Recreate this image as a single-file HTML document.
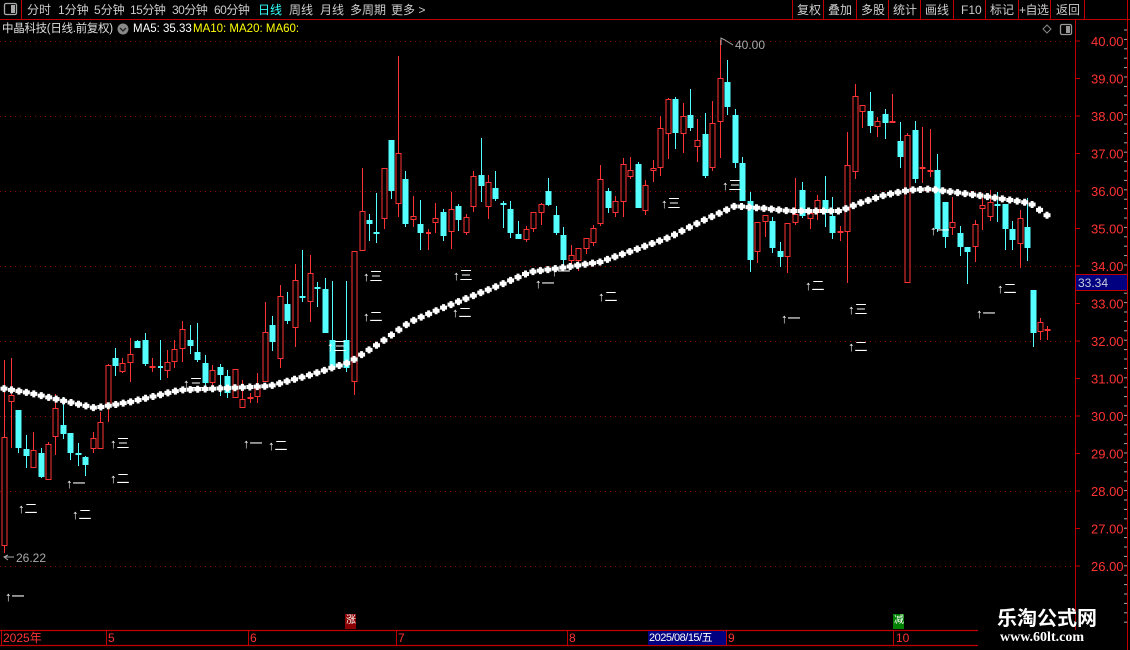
<!DOCTYPE html>
<html><head><meta charset="utf-8">
<style>
*{margin:0;padding:0;box-sizing:border-box}
body{width:1130px;height:650px;background:#000;overflow:hidden;position:relative;font-family:"Liberation Sans","Noto Sans CJK SC",sans-serif;color:#ccc}
.t{position:absolute;white-space:nowrap;font-size:12px;line-height:16px}
svg{position:absolute;left:0;top:0}
</style></head><body>
<svg width="1130" height="650" id="s">
<line x1="0" y1="19.5" x2="1130" y2="19.5" stroke="#c00000"/>
<line x1="21.5" y1="0" x2="21.5" y2="19" stroke="#c00000"/>
<rect x="4.5" y="3.5" width="12" height="11" rx="1.5" fill="none" stroke="#aaa" stroke-width="1.3"/>
<rect x="11" y="5" width="4" height="8" fill="#aaa"/>
<g stroke="#c00000">
<line x1="792.5" y1="0" x2="792.5" y2="19"/><line x1="823.5" y1="0" x2="823.5" y2="19"/>
<line x1="856.5" y1="0" x2="856.5" y2="19"/><line x1="888.5" y1="0" x2="888.5" y2="19"/>
<line x1="920.5" y1="0" x2="920.5" y2="19"/><line x1="953.5" y1="0" x2="953.5" y2="19"/>
<line x1="985.5" y1="0" x2="985.5" y2="19"/><line x1="1018.5" y1="0" x2="1018.5" y2="19"/>
<line x1="1050.5" y1="0" x2="1050.5" y2="19"/><line x1="1084.5" y1="0" x2="1084.5" y2="19"/>
<line x1="1127.5" y1="0" x2="1127.5" y2="650"/>
</g>
<circle cx="123" cy="29" r="5.5" fill="#888"/>
<path d="M120 28 L123 31 L126 28" stroke="#222" stroke-width="1.3" fill="none"/>
<path d="M1047 25 L1051 29 L1047 33 L1043 29 Z" fill="none" stroke="#888"/>
<rect x="1060.5" y="24.5" width="11" height="10" rx="1.5" fill="none" stroke="#999" stroke-width="1.3"/>
<rect x="1066" y="26" width="4" height="7" fill="#999"/>
<line x1="1075.5" y1="20" x2="1075.5" y2="630" stroke="#c00000"/>
<g id="grid"></g>
<g id="c"></g>
<g id="ma" fill="#fff"></g>
<rect x="1075.5" y="274.5" width="52" height="16" fill="#000080" stroke="#c00000"/>
<line x1="0" y1="630.5" x2="978" y2="630.5" stroke="#c00000" stroke-width="1.2"/>
<line x1="0" y1="645.5" x2="978" y2="645.5" stroke="#c00000" stroke-width="1.2"/>
<g stroke="#c00000">
<line x1="1.5" y1="630" x2="1.5" y2="646"/><line x1="106.5" y1="630" x2="106.5" y2="646"/>
<line x1="248.5" y1="630" x2="248.5" y2="646"/><line x1="396.5" y1="630" x2="396.5" y2="646"/>
<line x1="567.5" y1="630" x2="567.5" y2="646"/><line x1="726.5" y1="630" x2="726.5" y2="646"/>
<line x1="893.5" y1="630" x2="893.5" y2="646"/>
</g>
<rect x="648" y="631" width="78" height="14" fill="#000080"/>
<rect x="345" y="614" width="11" height="15" fill="#8b0000"/>
<rect x="893" y="614" width="11" height="15" fill="#008000"/>
<path d="M721 45 L721 38 L725 40 L733 45" stroke="#aaa" fill="none"/>
<path d="M8 560 L4 557 L8 555 M4 557 L14 557" stroke="#aaa" fill="none"/>
</svg>

<div class="t" style="left:27px;top:2px">分时</div>
<div class="t" style="left:58px;top:2px">1分钟</div>
<div class="t" style="left:94px;top:2px">5分钟</div>
<div class="t" style="left:130px;top:2px;letter-spacing:-0.5px">15分钟</div>
<div class="t" style="left:172px;top:2px;letter-spacing:-0.5px">30分钟</div>
<div class="t" style="left:214px;top:2px;letter-spacing:-0.5px">60分钟</div>
<div class="t" style="left:258px;top:2px;color:#3ff">日线</div>
<div class="t" style="left:289px;top:2px">周线</div>
<div class="t" style="left:320px;top:2px">月线</div>
<div class="t" style="left:350px;top:2px">多周期</div>
<div class="t" style="left:391px;top:2px">更多 &gt;</div>
<div class="t" style="left:797px;top:2px">复权</div>
<div class="t" style="left:828px;top:2px">叠加</div>
<div class="t" style="left:861px;top:2px">多股</div>
<div class="t" style="left:893px;top:2px">统计</div>
<div class="t" style="left:925px;top:2px">画线</div>
<div class="t" style="left:961px;top:2px">F10</div>
<div class="t" style="left:990px;top:2px">标记</div>
<div class="t" style="left:1019px;top:2px;letter-spacing:-0.5px">+自选</div>
<div class="t" style="left:1056px;top:2px">返回</div>

<div class="t" style="left:2px;top:21px;font-size:11.5px;color:#ddd;letter-spacing:-0.3px">中晶科技(日线.前复权)</div>
<div class="t" style="left:133px;top:21px;font-size:11.5px;color:#fff">MA5: 35.33</div>
<div class="t" style="left:193px;top:21px;font-size:11.5px;color:#ff0">MA10: MA20: MA60:</div>

<div class="t" style="left:735px;top:37px;font-size:12px;color:#aaa">40.00</div>
<div class="t" style="left:16px;top:550px;font-size:12px;color:#aaa">26.22</div>
<div class="t" style="left:1078px;top:275px;font-size:12px;color:#ccd">33.34</div>

<div id="labels"></div>

<div class="t" style="left:3px;top:630px;font-size:12px;color:#f33">2025年</div>
<div class="t" style="left:108px;top:630px;font-size:12px;color:#f33">5</div>
<div class="t" style="left:250px;top:630px;font-size:12px;color:#f33">6</div>
<div class="t" style="left:398px;top:630px;font-size:12px;color:#f33">7</div>
<div class="t" style="left:569px;top:630px;font-size:12px;color:#f33">8</div>
<div class="t" style="left:649px;top:630px;font-size:11px;color:#fff;letter-spacing:-0.5px">2025/08/15/五</div>
<div class="t" style="left:728px;top:630px;font-size:12px;color:#f33">9</div>
<div class="t" style="left:896px;top:630px;font-size:12px;color:#f33">10</div>
<div class="t" style="left:346px;top:613px;font-size:10px;color:#fff">涨</div>
<div class="t" style="left:894px;top:613px;font-size:10px;color:#fff">减</div>
<div class="t" style="left:997px;top:607px;font-size:20px;line-height:24px;color:#fff;font-weight:bold">乐淘公式网</div>
<div class="t" style="left:1000px;top:630px;font-size:14px;color:#fff;font-weight:bold;font-family:'Liberation Serif',serif">www.60lt.com</div>

<script>
var NS="http://www.w3.org/2000/svg";
function el(p,t,a){var e=document.createElementNS(NS,t);for(var k in a)e.setAttribute(k,a[k]);p.appendChild(e);return e;}
var g=document.getElementById('grid');
for(var i=0;i<=14;i++){var y=41+i*37.5;
 el(g,'line',{x1:1075,y1:y,x2:1080,y2:y,stroke:'#c00000'});
 var tx=el(g,'text',{x:1091,y:y+5,fill:'#ff3333','font-size':13,'font-family':'Liberation Sans'});tx.textContent=(40-i).toFixed(2);
 if(i%2==0) el(g,'line',{x1:0,y1:y+0.5,x2:1075,y2:y+0.5,stroke:'#8b0000','stroke-dasharray':'1 4'});
}
for(var y=30;y<630;y+=9.4){el(g,'line',{x1:1124,y1:y,x2:1127,y2:y,stroke:'#aaa'});}
var C=[[4,437,546,360,553,'r'],[11,395,402,358,448,'r'],[18,410,448,410,453,'c'],[26,449,456,435,468,'c'],[33,450,468,432,468,'r'],[41,453,477,448,478,'c'],[48,444,480,442,480,'r'],[55,408,437,394,455,'r'],[63,425,434,397,439,'c'],[70,433,453,433,460,'c'],[78,453,455,443,466,'c'],[85,457,465,456,476,'c'],[93,438,449,432,453,'r'],[100,422,449,412,449,'r'],[108,365,407,364,422,'r'],[115,358,366,348,376,'c'],[122,363,372,358,373,'r'],[130,354,363,338,382,'r'],[137,341,348,340,348,'c'],[145,340,364,333,366,'c'],[152,366,368,358,372,'r'],[160,366,367,340,380,'c'],[167,362,371,350,378,'r'],[174,349,362,340,368,'r'],[182,329,349,321,362,'r'],[190,340,346,325,354,'c'],[197,352,360,323,362,'c'],[205,363,383,355,387,'c'],[212,370,383,365,387,'r'],[220,367,375,364,396,'c'],[227,376,393,370,398,'c'],[235,369,398,369,398,'r'],[242,399,408,380,408,'r'],[250,397,399,393,403,'r'],[257,386,397,373,403,'r'],[265,332,382,302,382,'r'],[272,325,342,316,351,'c'],[280,296,359,285,368,'r'],[287,304,321,292,324,'c'],[295,280,328,264,347,'r'],[302,296,298,250,302,'c'],[310,273,302,255,322,'r'],[317,287,289,282,307,'c'],[325,289,333,278,333,'c'],[332,340,368,281,368,'c'],[346,340,368,281,372,'c'],[354,251,382,251,395,'r'],[362,211,251,168,251,'r'],[369,220,224,214,241,'c'],[376,232,234,193,243,'c'],[384,168,219,168,229,'r'],[391,140,191,140,199,'c'],[398,153,204,56,217,'r'],[405,179,224,171,227,'c'],[413,216,220,196,227,'r'],[420,224,233,200,250,'c'],[428,232,233,229,250,'r'],[435,218,223,203,233,'r'],[443,212,236,209,241,'c'],[451,209,232,192,249,'r'],[458,206,220,204,231,'c'],[466,217,233,214,235,'r'],[473,176,207,171,212,'r'],[481,175,186,138,202,'c'],[488,182,207,175,219,'r'],[495,188,199,171,201,'c'],[503,203,205,201,228,'c'],[510,209,233,201,238,'c'],[518,234,239,221,239,'c'],[526,229,240,226,242,'r'],[533,212,229,212,232,'r'],[541,204,213,203,225,'r'],[548,191,205,178,206,'c'],[556,215,233,206,235,'c'],[563,235,260,227,265,'c'],[571,255,261,245,264,'r'],[578,248,261,248,271,'r'],[586,238,249,238,254,'r'],[593,228,243,225,246,'r'],[600,179,224,165,226,'r'],[608,191,208,188,213,'c'],[615,201,213,196,217,'r'],[623,164,202,158,217,'r'],[630,170,177,157,179,'r'],[638,164,208,162,208,'c'],[645,185,211,180,215,'r'],[653,168,171,160,182,'r'],[660,128,168,116,176,'r'],[668,99,134,98,159,'r'],[675,99,133,97,149,'c'],[683,116,134,103,153,'r'],[690,115,128,89,131,'c'],[697,140,147,119,162,'r'],[705,134,176,113,178,'c'],[712,123,168,101,171,'r'],[720,78,122,40,158,'r'],[727,82,107,60,115,'c'],[735,115,163,109,168,'c'],[742,163,201,157,201,'c'],[750,201,260,192,272,'c'],[757,222,252,222,263,'r'],[765,215,222,215,237,'r'],[772,221,248,217,253,'c'],[780,251,257,242,267,'c'],[787,223,257,223,273,'r'],[795,214,223,178,225,'r'],[802,190,216,182,218,'c'],[810,213,219,213,229,'r'],[817,200,213,195,220,'r'],[825,200,213,176,227,'c'],[832,216,233,197,239,'c'],[840,231,233,226,241,'r'],[847,165,232,132,283,'r'],[855,96,172,84,179,'r'],[862,105,112,105,128,'r'],[870,111,126,92,133,'c'],[877,121,127,117,137,'r'],[885,114,123,109,139,'c'],[892,121,123,94,123,'r'],[900,141,157,122,168,'c'],[907,135,283,133,283,'r'],[915,130,179,121,183,'c'],[922,167,169,127,183,'r'],[930,170,172,129,177,'r'],[937,170,229,154,232,'c'],[945,202,237,202,248,'c'],[952,222,228,197,235,'r'],[960,233,247,226,256,'c'],[967,247,252,247,284,'c'],[975,224,247,220,262,'r'],[982,205,209,193,230,'r'],[990,202,217,190,221,'r'],[997,204,206,192,222,'c'],[1005,204,229,204,250,'c'],[1012,229,240,221,250,'c'],[1020,218,244,210,268,'r'],[1027,227,248,198,261,'c'],[1033,290,333,290,347,'c'],[1040,322,332,318,340,'r'],[1047,329,331,326,340,'r']];
var cg=document.getElementById('c');
C.forEach(function(d){var x=d[0],col=d[5]=='r'?'#ff3333':'#54ffff';
 var t=Math.min(d[1],d[2]),b=Math.max(d[1],d[2]);
 el(cg,'line',{x1:x+0.5,y1:d[3],x2:x+0.5,y2:t,stroke:col});
 el(cg,'line',{x1:x+0.5,y1:b,x2:x+0.5,y2:d[4],stroke:col});
 if(b-t<2){el(cg,'rect',{x:x-2,y:t,width:5,height:2,fill:col});}
 else if(d[5]=='r') el(cg,'rect',{x:x-2,y:t+0.5,width:5,height:b-t-1,fill:'#000',stroke:col});
 else el(cg,'rect',{x:x-2.5,y:t,width:6,height:b-t,fill:col});
});
var P=[[0,388],[30,393],[60,400],[95,408],[130,402],[180,390],[230,388],[270,386],[310,375],[350,362],[380,343],[410,322],[440,309],[470,297],[500,285],[530,272],[560,268],[600,262],[640,248],[670,237],[700,222],[735,206],[760,208],[790,211],[840,211],[860,203],[885,195],[910,190],[930,189],[960,193],[990,197],[1030,203],[1048,216]];
function iy(x){for(var i=0;i<P.length-1;i++){if(x>=P[i][0]&&x<=P[i+1][0]){var f=(x-P[i][0])/(P[i+1][0]-P[i][0]);return P[i][1]+f*(P[i+1][1]-P[i][1]);}}return P[P.length-1][1];}
var mg=document.getElementById('ma');
for(var x=4;x<=1048;x+=7.45){var y=iy(x);el(mg,'path',{d:'M'+(x-1.5)+' '+(y-3.5)+'h3v1.5h2v4h-2v1.5h-3v-1.5h-2v-4h2z'});}
var L=[[5,597,'一'],[18,509,'二'],[72,515,'二'],[66,484,'一'],[110,479,'二'],[110,444,'三'],[243,444,'一'],[268,446,'二'],[183,384,'三'],[327,347,'三'],[363,317,'二'],[363,277,'三'],[453,276,'三'],[452,313,'二'],[535,284,'一'],[551,272,'一'],[598,297,'二'],[661,204,'三'],[722,186,'三'],[781,319,'一'],[805,286,'二'],[848,310,'三'],[848,347,'二'],[930,231,'一'],[976,314,'一'],[997,289,'二']];
var h='';L.forEach(function(l){h+='<div class="t" style="left:'+l[0]+'px;top:'+(l[1]-8)+'px;font-size:13px;color:#fff">↑'+l[2]+'</div>';});
document.getElementById('labels').innerHTML=h;
</script>
</body></html>
